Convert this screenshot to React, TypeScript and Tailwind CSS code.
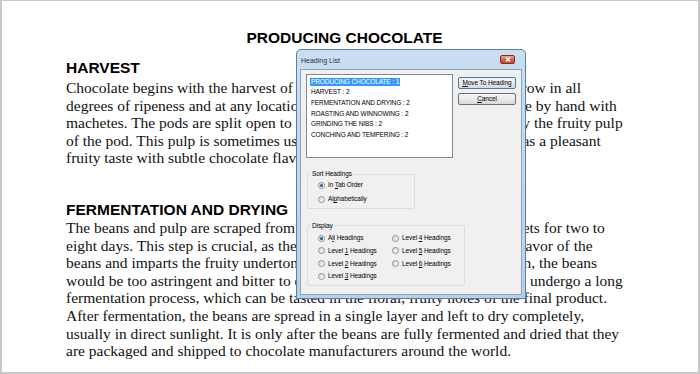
import type { ReactNode } from "react";

const harvest = [
  "Chocolate begins with the harvest of pods from cacao trees. These pods grow in all",
  "degrees of ripeness and at any location on the tree. They are cut off the tree by hand with",
  "machetes. The pods are split open to reveal the beans, which are soaked by the fruity pulp",
  "of the pod. This pulp is sometimes used to make juice and drinks, and it has a pleasant",
  "fruity taste with subtle chocolate flavors.",
];

const fermentation = [
  "The beans and pulp are scraped from the pods and placed in covered baskets for two to",
  "eight days. This step is crucial, as the fermentation process develops the flavor of the",
  "beans and imparts the fruity undertones of the cocoa. Without fermentation, the beans",
  "would be too astringent and bitter to eat raw. The most prized cocoa beans undergo a long",
  "fermentation process, which can be tasted in the floral, fruity notes of the final product.",
  "After fermentation, the beans are spread in a single layer and left to dry completely,",
  "usually in direct sunlight. It is only after the beans are fully fermented and dried that they",
  "are packaged and shipped to chocolate manufacturers around the world.",
];

const headings = [
  "PRODUCING CHOCOLATE : 1",
  "HARVEST : 2",
  "FERMENTATION AND DRYING : 2",
  "ROASTING AND WINNOWING : 2",
  "GRINDING THE NIBS : 2",
  "CONCHING AND TEMPERING : 2",
];

function Paragraph({ lines }: { lines: string[] }) {
  return (
    <div className="font-['Liberation_Serif',serif] text-[15.5px] leading-[17.6px] text-[#111]">
      {lines.map((l) => (
        <div key={l} className="whitespace-nowrap">
          {l}
        </div>
      ))}
    </div>
  );
}

function Radio({ checked, children }: { checked?: boolean; children: ReactNode }) {
  return (
    <div className="flex items-center gap-[3px] h-[12.7px]">
      <span className="w-[7px] h-[7px] rounded-full border border-[#8e8f8f] bg-linear-to-br from-[#d9d9d9] to-[#fbfbfb] flex items-center justify-center">
        {checked && <span className="w-[3px] h-[3px] rounded-full bg-[#1b5b9c]" />}
      </span>
      <span>{children}</span>
    </div>
  );
}

function Btn({ children, primary }: { children: ReactNode; primary?: boolean }) {
  return (
    <div
      className={
        "h-[12px] w-[58px] rounded-[2px] border flex items-center justify-center bg-linear-to-b from-[#f4f4f4] via-[#ebebeb] to-[#d8d8d8] " +
        (primary ? "border-[#3c7fb1]" : "border-[#707070]")
      }
    >
      {children}
    </div>
  );
}

const U = ({ c }: { c: string }) => <span className="underline underline-offset-1">{c}</span>;

function HeadingDialog() {
  return (
    <div className="absolute left-[294px] top-[48px] w-[230px] h-[250px] rounded-t-[5px] border border-[#5b7ea3] bg-linear-to-b from-[#cadef2] to-[#b9d0ea] flex flex-col font-['Liberation_Sans',Arial,sans-serif] text-[6.5px] text-black tracking-[-0.1px]">
      <div className="h-[19px] flex justify-between pl-[4px] pr-[10px]">
        <span className="pt-[7px] text-[7px] leading-[8px] text-[#1f2f45] tracking-normal">Heading List</span>
        <span className="mt-[5px] w-[15px] h-[9px] rounded-[2px] border border-[#8b2c1c] bg-linear-to-b from-[#e9a696] via-[#d4654f] to-[#c24a34] flex items-center justify-center">
          <svg width="6" height="5" viewBox="0 0 6 5">
            <path d="M1 0.5 L5 4.5 M5 0.5 L1 4.5" stroke="#fff" strokeWidth="1.4" />
          </svg>
        </span>
      </div>
      <div className="flex-1 mx-[3px] mb-[3px] border border-[#8aa4c2] bg-[#f0f0f0] pt-[4px] pl-[5px] pr-[4px]">
        <div className="flex gap-[5px]">
          <div className="w-[147px] h-[84px] border border-[#828790] bg-white pt-[1.5px] pl-[3px]">
            {headings.map((h, i) => (
              <div key={h} className="h-[10.6px] flex items-center whitespace-nowrap">
                <span className={i === 0 ? "bg-[#3399ff] text-white px-[1px] leading-[8px]" : "px-[1px] leading-[8px]"}>{h}</span>
              </div>
            ))}
          </div>
          <div className="flex flex-col gap-[4px] pt-[3px]">
            <Btn primary>
              <U c="M" />ove To Heading
            </Btn>
            <Btn>
              <U c="C" />ancel
            </Btn>
          </div>
        </div>
        <fieldset className="mt-[12px] ml-[1px] w-[108px] border border-[#d5dfe5] rounded-[2px] pl-[10px] pt-[1px] pb-[2px]">
          <legend className="ml-[-7px] px-[1px] leading-[8px]">Sort Headings</legend>
          <div className="flex flex-col gap-[1.3px]">
            <Radio checked>
              In <U c="T" />ab Order
            </Radio>
            <Radio>
              Al<U c="p" />habetically
            </Radio>
          </div>
        </fieldset>
        <fieldset className="mt-[13px] ml-[1px] w-[158px] border border-[#d5dfe5] rounded-[2px] pl-[10px] pt-[2px] pb-[3px]">
          <legend className="ml-[-7px] px-[1px] leading-[8px]">Display</legend>
          <div className="flex">
            <div className="w-[74px]">
              <Radio checked>
                A<U c="l" />l Headings
              </Radio>
              <Radio>
                Level <U c="1" /> Headings
              </Radio>
              <Radio>
                Level <U c="2" /> Headings
              </Radio>
              <Radio>
                Level <U c="3" /> Headings
              </Radio>
            </div>
            <div>
              <Radio>
                Level <U c="4" /> Headings
              </Radio>
              <Radio>
                Level <U c="5" /> Headings
              </Radio>
              <Radio>
                Level <U c="6" /> Headings
              </Radio>
            </div>
          </div>
        </fieldset>
      </div>
    </div>
  );
}

export default function App() {
  return (
    <div className="relative w-[700px] h-[374px] bg-white border-t border-r-2 border-b-2 border-l-2 border-[#c8c8c8] overflow-hidden">
      <div className="pl-[64px] pr-[75px] pt-[28px]">
        <h1 className="text-center font-['Liberation_Sans',Arial,sans-serif] font-bold text-[15.5px] leading-[18px] text-black">
          PRODUCING CHOCOLATE
        </h1>
        <h2 className="mt-[12px] font-['Liberation_Sans',Arial,sans-serif] font-bold text-[15.5px] leading-[18px] text-black">
          HARVEST
        </h2>
        <div className="mt-[2px]">
          <Paragraph lines={harvest} />
        </div>
        <h2 className="mt-[34px] font-['Liberation_Sans',Arial,sans-serif] font-bold text-[15.5px] leading-[18px] text-black">
          FERMENTATION AND DRYING
        </h2>
        <Paragraph lines={fermentation} />
      </div>
      <HeadingDialog />
    </div>
  );
}
